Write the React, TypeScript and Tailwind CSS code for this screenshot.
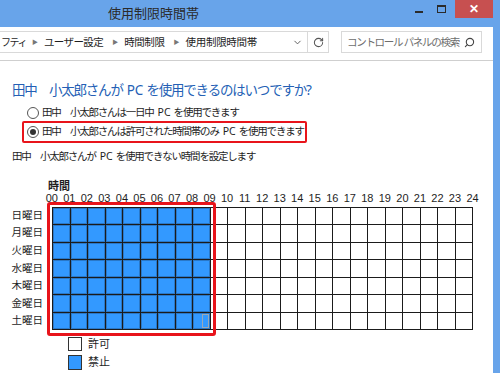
import React from "react";
import { ChevronDown, RotateCw, Search } from "lucide-react";

const hours = Array.from({ length: 25 }, (_, i) => String(i).padStart(2, "0"));
const days = ["日曜日", "月曜日", "火曜日", "水曜日", "木曜日", "金曜日", "土曜日"];

function Radio({ checked }: { checked?: boolean }) {
  return (
    <span className="w-[12px] h-[12px] rounded-full border border-[#555] bg-white flex items-center justify-center shrink-0">
      {checked && <span className="w-[6px] h-[6px] rounded-full bg-[#333]" />}
    </span>
  );
}

function PC() {
  return <span className="tracking-normal ml-[4px] mr-[3px]">PC</span>;
}

export default function App() {
  return (
    <div
      className="w-[500px] h-[373px] overflow-hidden bg-white flex flex-col text-[#1e1e1e]"
      style={{ fontFamily: '"Noto Sans", "Noto Sans CJK JP", sans-serif' }}
    >
      {/* Title bar */}
      <div className="h-[27px] bg-[#68a4ea] flex items-start shrink-0">
        <div className="ml-[108px] mt-[5px] text-[13px] leading-[17px] text-[#2b2b2b]">使用制限時間帯</div>
        <div className="ml-auto flex items-start">
          <div className="w-[22px] h-[18px] flex items-center justify-center">
            <span className="w-[8px] h-[2px] bg-[#2b2b2b] mt-[6px]" />
          </div>
          <div className="w-[22px] h-[18px] flex items-center justify-center">
            <span className="w-[9px] h-[8px] border border-[#2b2b2b] border-t-2" />
          </div>
          <div className="w-[38px] h-[18px] bg-[#c75050] flex items-center justify-center text-white text-[12px] font-bold leading-none ml-[3px]">
            ✕
          </div>
          <div className="w-[7px]" />
        </div>
      </div>

      <div className="flex flex-1 min-h-0">
        <div className="flex-1 flex flex-col min-w-0">
          {/* Toolbar */}
          <div className="h-[34px] border-b border-[#cfcfcf] flex items-start shrink-0">
            <div className="mt-[4px] ml-[-1px] w-[330px] h-[22px] border border-[#d9d9d9] flex items-center text-[10.5px] leading-none whitespace-nowrap overflow-hidden">
              <span className="ml-[1px] text-[10px] tracking-[-1.5px]">フティ</span>
              <span className="ml-[6px] text-[6px] text-[#777]">▶</span>
              <span className="ml-[6px] tracking-[-0.6px]">ユーザー設定</span>
              <span className="ml-[9px] text-[6px] text-[#777]">▶</span>
              <span className="ml-[6px] tracking-[-0.4px]">時間制限</span>
              <span className="ml-[9px] text-[6px] text-[#777]">▶</span>
              <span className="ml-[6px] tracking-[-0.3px]">使用制限時間帯</span>
              <span className="ml-auto mr-[4px] text-[#555]">
                <ChevronDown size={11} strokeWidth={2} />
              </span>
              <span className="h-full w-px bg-[#d9d9d9]" />
              <span className="w-[20px] flex justify-center text-[#555]">
                <RotateCw size={11} strokeWidth={2.2} />
              </span>
            </div>
            <div className="mt-[4px] ml-[12px] w-[141px] h-[22px] border border-[#d9d9d9] flex items-center text-[10.5px] leading-none text-[#6d6d6d] whitespace-nowrap overflow-hidden">
              <span className="ml-[5px] tracking-[-1.3px]">コントロール パネルの検索</span>
              <span className="ml-auto mr-[6px] -scale-x-100 text-[#444]">
                <Search size={11} strokeWidth={2.4} />
              </span>
            </div>
          </div>

          {/* Content */}
          <div className="flex flex-col pl-[12px]">
            <div className="mt-[19px] text-[13.5px] leading-[20px] tracking-[-1.2px] text-[#245fb5] whitespace-nowrap">
              田中　小太郎さんが<PC />を使用できるのはいつですか?
            </div>
            <div className="mt-[5px] ml-[15px] flex items-center gap-[3px] h-[16px] text-[10.5px] tracking-[-1.2px] whitespace-nowrap">
              <Radio />
              <span>
                田中　小太郎さんは一日中<PC />を使用できます
              </span>
            </div>
            <div className="ml-[10px] w-[285px] h-[22px] border-2 border-[#e8141b] rounded-[2px] flex items-center gap-[3px] pl-[3px] text-[10.5px] tracking-[-1.2px] whitespace-nowrap">
              <Radio checked />
              <span>
                田中　小太郎さんは許可された時間帯のみ<PC />を使用できます
              </span>
            </div>
            <div className="mt-[5px] h-[16px] leading-[16px] text-[10.5px] tracking-[-1.2px] whitespace-nowrap">
              田中　小太郎さんが<PC />を使用できない時間を設定します
            </div>

            <div className="mt-[15px] ml-[36px] h-[13px] leading-[13px] text-[11px] font-bold">時間</div>
            <div
              className="ml-[31px] h-[12px] leading-[12px] grid grid-cols-[repeat(25,17.54px)] text-[11px]"
              style={{ fontFamily: '"Liberation Sans", sans-serif' }}
            >
              {hours.map((h) => (
                <span key={h} className="text-center">
                  {h}
                </span>
              ))}
            </div>

            <div className="mt-[3px] flex">
              <div className="w-[31px] flex flex-col text-[10.5px]">
                {days.map((d) => (
                  <div key={d} className="h-[17.57px] flex items-center justify-end whitespace-nowrap">
                    {d}
                  </div>
                ))}
              </div>
              <div className="ml-[9px] relative">
                <div className="w-[421px] h-[123px] bg-[#1b1b1b] p-px grid grid-cols-24 grid-rows-7 gap-px">
                  {days.map((d, r) =>
                    hours.slice(0, 24).map((h, c) => (
                      <div
                        key={d + h}
                        className={
                          c < 9
                            ? "bg-[#3399ff] relative shadow-[inset_0_0_0_1px_#2a78c8]"
                            : "bg-white"
                        }
                      >
                        {r === 6 && c === 8 && (
                          <span className="absolute right-[1px] top-[1px] bottom-[1px] w-[7px] border border-[#9aa9b8]" />
                        )}
                      </div>
                    ))
                  )}
                </div>
                <div className="absolute left-[-5px] top-[-5px] w-[169px] h-[134px] border-[3px] border-[#e8141b] rounded-[3px]" />
              </div>
            </div>

            <div className="mt-[7px] ml-[56px] flex flex-col gap-[4px] text-[11px]">
              <div className="flex items-center gap-[6px] h-[14px]">
                <span className="w-[14px] h-[14px] border border-[#333] bg-white" />
                <span>許可</span>
              </div>
              <div className="flex items-center gap-[6px] h-[15px]">
                <span className="w-[14px] h-[15px] border border-[#333] bg-[#3399ff]" />
                <span>禁止</span>
              </div>
            </div>
          </div>
        </div>
        <div className="w-[7px] bg-[#68a4ea] shrink-0" />
      </div>
    </div>
  );
}
